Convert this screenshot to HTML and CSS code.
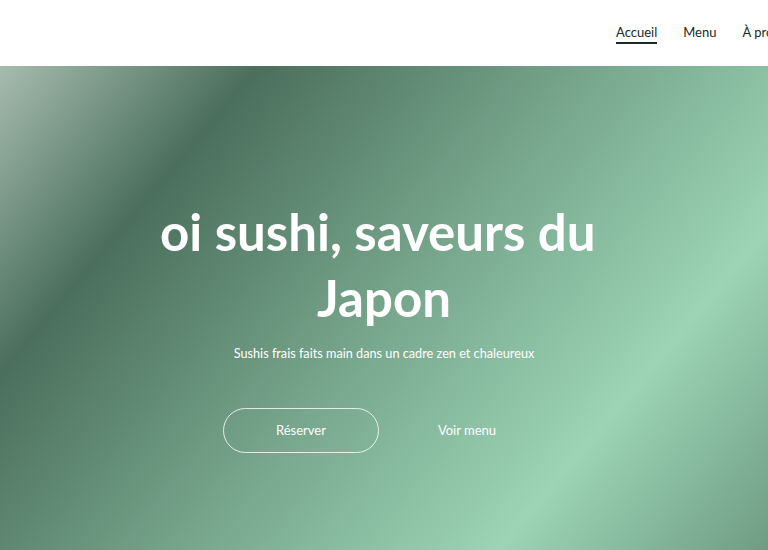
FILE: index.html
```html
<!DOCTYPE html>
<html lang="fr">
<head>
    <meta charset="UTF-8">
    <meta name="viewport" content="width=device-width, initial-scale=1.0">
    <title>Hoi Sushi</title>
    <link rel="stylesheet" href="styles.css">
</head>
<body>
    <!-- En-tête -->
    <header class="site-header">
        <a class="brand" href="#"></a>
        <nav class="nav">
            <a href="#" class="nav-link active">Accueil</a>
            <a href="#" class="nav-link">Menu</a>
            <a href="#" class="nav-link">À propos</a>
            <a href="#" class="nav-link">Contact</a>
        </nav>
    </header>

    <!-- Bannière -->
    <section class="hero">
        <div class="hero-content">
            <h1>oi sushi, saveurs du&nbsp;<br>Japon</h1>
            <p class="subtitle">Sushis frais faits main dans un cadre zen et chaleureux</p>
            <div class="actions">
                <a href="#" class="btn btn-outline">Réserver</a>
                <a href="#" class="btn btn-ghost">Voir menu</a>
            </div>
        </div>
    </section>
</body>
</html>
```

FILE: styles.css
```css
body {
    font-family: Lato, 'Open Sans', sans-serif;
    margin: 0;
    overflow: hidden;
    color: #1c2b24;
}
a {
    text-decoration: none;
    color: inherit;
}
.site-header {
    display: flex;
    align-items: center;
    height: 66px;
    padding-left: 24px;
    background: #fff;
}
.brand {
    flex: 0 0 592px;
}
.nav {
    display: flex;
    gap: 26px;
    flex-shrink: 0;
}
.nav-link {
    font-size: 13px;
    padding: 2px 0;
    border-bottom: 2px solid transparent;
    white-space: nowrap;
}
.nav-link.active {
    border-bottom-color: #1c2b24;
}
.hero {
    height: 484px;
    background: linear-gradient(130deg, #a6bcae 0%, #4b6f5c 22%, #76a58b 50%, #9cd4b5 77%, #6f9c83 100%);
    color: #fff;
    text-align: center;
}
.hero-content {
    padding-top: 133px;
    display: flex;
    flex-direction: column;
    align-items: center;
}
h1 {
    margin: 0;
    font-size: 51px;
    font-weight: 700;
    line-height: 66px;
}
.subtitle {
    margin: 14px 0 0;
    font-size: 12.7px;
}
.actions {
    display: flex;
    gap: 10px;
    margin-top: 47px;
}
.btn {
    width: 156px;
    height: 45px;
    line-height: 43px;
    box-sizing: border-box;
    border-radius: 23px;
    font-size: 13px;
    color: #fff;
}
.btn-outline {
    border: 1px solid rgba(255, 255, 255, 0.8);
}
.btn-ghost {
    border: 1px solid transparent;
}
```
